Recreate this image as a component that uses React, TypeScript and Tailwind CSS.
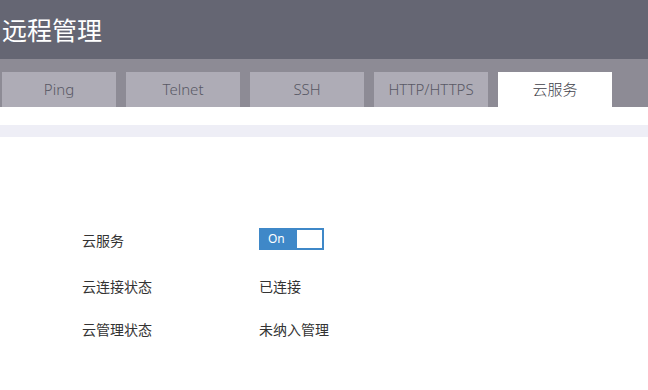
import { useState } from 'react';

const tabs = ['Ping', 'Telnet', 'SSH', 'HTTP/HTTPS', '云服务'];

export default function App() {
  const [active, setActive] = useState(4);
  const [cloudOn, setCloudOn] = useState(true);

  return (
    <div className="w-[648px] h-[390px] bg-white overflow-hidden font-['Noto_Sans','Noto_Sans_CJK_SC',sans-serif]">
      {/* Header */}
      <header className="h-[59px] bg-[#656673] flex items-center pl-[2px]">
        <h1 className="text-[25px] leading-none text-white font-['Noto_Sans_CJK_SC',sans-serif]">远程管理</h1>
      </header>

      {/* Tabs */}
      <nav className="h-[48px] bg-[#8d8b95] flex items-end gap-[10px] pl-[2px]">
        {tabs.map((t, i) => (
          <button
            key={t}
            onClick={() => setActive(i)}
            className={`w-[114px] h-[35px] flex items-center justify-center text-[15px] font-light ${
              active === i ? 'bg-white text-[#3e3e48]' : 'bg-[#aeacb6] text-[#595965]'
            }`}
          >
            {t}
          </button>
        ))}
      </nav>

      <div className="h-[18px] bg-white" />
      <div className="h-[12px] bg-[#eeeef6]" />

      {/* Settings */}
      <div className="pt-[91px] pl-[82px] text-[14px] text-[#333] font-['Noto_Sans_CJK_SC',sans-serif]">
        <div className="flex items-center h-[22px]">
          <span className="w-[177px] pt-[2px]">云服务</span>
          <button
            onClick={() => setCloudOn(!cloudOn)}
            className="w-[65px] h-[22px] bg-[#3f88c8] flex items-center justify-between p-[2px] pl-[9px]"
          >
            <span className="text-white text-[12px] font-['Noto_Sans',sans-serif]">{cloudOn ? 'On' : 'Off'}</span>
            <span className="w-[25px] h-[18px] bg-white" />
          </button>
        </div>
        <div className="flex items-center h-[22px] mt-[25px]">
          <span className="w-[177px]">云连接状态</span>
          <span>已连接</span>
        </div>
        <div className="flex items-center h-[22px] mt-[21px]">
          <span className="w-[177px]">云管理状态</span>
          <span>未纳入管理</span>
        </div>
      </div>
    </div>
  );
}
